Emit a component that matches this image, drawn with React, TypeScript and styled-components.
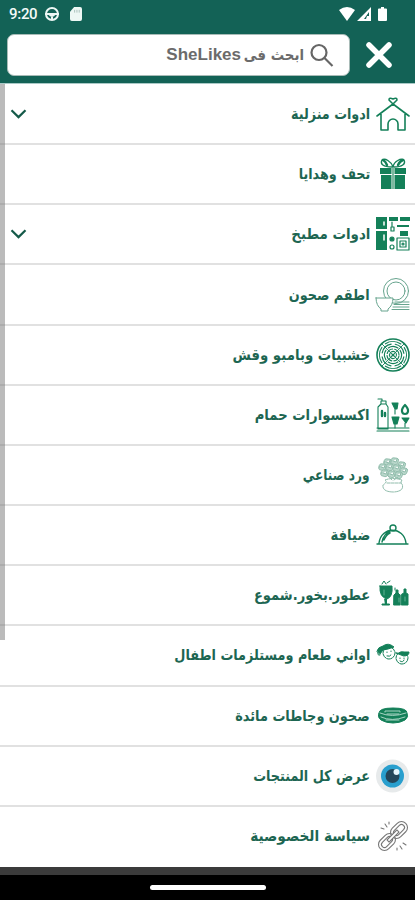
import React from "react";
import styled, { createGlobalStyle } from "styled-components";

const GREEN = "#148059";

const GlobalStyle = createGlobalStyle`
  * { box-sizing: border-box; }
  body { margin: 0; background: #fff; overflow: hidden; }
`;

const Screen = styled.div`
  width: 415px;
  height: 900px;
  display: flex;
  flex-direction: column;
  background: #fff;
  font-family: "DejaVu Sans", sans-serif;
`;

const Header = styled.header`
  height: 84px;
  flex: none;
  background: #136256;
  border-bottom: 1px solid #a9c9c6;
`;

const StatusBar = styled.div`
  height: 27px;
  padding: 0 28px 0 9px;
  display: flex;
  align-items: center;
  justify-content: space-between;
  color: #f3faf8;
`;

const StatusGroup = styled.div<{ $gap: number }>`
  display: flex;
  align-items: center;
  gap: ${(p) => p.$gap}px;
`;

const BatterySlot = styled.span`
  display: flex;
  margin-left: 5px;
`;

const Clock = styled.span`
  font: 500 15px/20px Roboto, sans-serif;
  width: 29px;
  margin-right: -4px;
  letter-spacing: -0.3px;
`;

const SearchBar = styled.div`
  display: flex;
  align-items: center;
  padding: 7px 21px 0 7px;
  justify-content: space-between;
`;

const SearchField = styled.div`
  width: 343px;
  height: 42px;
  border-radius: 7px;
  border: 1px solid #a8bbb7;
  background: #fff;
  display: flex;
  flex-direction: row-reverse;
  align-items: center;
  padding-right: 15px;
  gap: 5px;
`;

const Placeholder = styled.span`
  direction: rtl;
  display: flex;
  color: #6b6b6b;
  font: 700 15px/24px "DejaVu Sans", sans-serif;
  white-space: nowrap;
`;

const Prompt = styled.span`
  width: 63px;
  transform: scaleX(0.89);
  transform-origin: right center;
`;

const Brand = styled.bdi`
  font: 700 17px/24px "Liberation Sans", sans-serif;
`;

const CloseButton = styled.button`
  border: 0;
  padding: 0;
  background: none;
  width: 30px;
  height: 30px;
  display: flex;
`;

const Menu = styled.ul`
  list-style: none;
  margin: 0;
  padding: 1px 0 0;
  height: 783px;
  flex: none;
  display: grid;
  grid-template-rows: repeat(13, 1fr);
  position: relative;
`;

const Row = styled.li`
  direction: rtl;
  display: flex;
  align-items: center;
  gap: 5px;
  padding: 0 5px 0 10px;
  border-bottom: 2px solid #e1e1e1;
  min-height: 0;
  &:last-of-type { border-bottom-color: #fff; }
`;

const IconSlot = styled.span`
  width: 35px;
  height: 36px;
  flex: none;
  display: flex;
`;

const Label = styled.span<{ $stretch: number }>`
  color: #1d6652;
  font: 700 15px/24px "DejaVu Sans", sans-serif;
  white-space: nowrap;
  transform: scaleX(${(p) => p.$stretch});
  transform-origin: right center;
`;

const ChevronSlot = styled.span`
  margin-right: auto;
  display: flex;
`;

const ScrollThumb = styled.div`
  position: absolute;
  left: 0;
  top: 0;
  width: 5px;
  height: 556px;
  background: rgba(120, 120, 120, 0.5);
`;

const BottomBar = styled.footer`
  flex: 1;
  background: #000;
  border-top: 8px solid #3b3b3b;
  display: flex;
  justify-content: center;
  align-items: flex-start;
  padding-top: 10px;
`;

const HomeHandle = styled.div`
  width: 116px;
  height: 5px;
  border-radius: 3px;
  background: #fff;
`;

type Drawing = { children: React.ReactNode; stroke?: string; width?: number };
const Icon = ({ children, stroke = GREEN, width = 1.4 }: Drawing) => (
  <svg width="35" height="36" viewBox="0 0 35 36" fill="none" stroke={stroke} strokeWidth={width} strokeLinecap="round" strokeLinejoin="round">
    {children}
  </svg>
);

const House = () => (
  <Icon width={1.6}>
    <path d="M2 20 18 8 34 20M6 18v16h7v-6a5 5 0 0 1 10 0v6h7V18M18 8l-4-4q0-3 4-1 4-2 4 1z" />
  </Icon>
);

const Gift = () => (
  <Icon>
    <g fill={GREEN} stroke="none">
      <path d="M5 12h11.500v6H5zM19.500 12H31v6H19.500zM6 19h10.500v14H6zM19.500 19H30v14H19.500z" />
      <path d="M17 12h2v21h-2z" fill="#7db9a0" />
    </g>
    <path d="M17 11C8 11 5 8 7 4c3-2 9 1 11 7 1-6 8-9 11-7 2 4-2 7-10 7" />
    <path d="M8 4c2 1 3 2 4 5M28 4c-3 1-4 3-5 5" strokeWidth="2.4" />
  </Icon>
);

const Kitchen = () => (
  <Icon width={1.2}>
    <g fill={GREEN} stroke="none">
      <path d="M1 1h11v12H1zM1 15h11v19H1zM14 1h9v4h-9zM25 1h10v4H25zM22 9h12v2H22zM25 15h8v5h-8z" />
    </g>
    <path d="M9 6v3M9 19v5" stroke="#fff" strokeWidth="1.5" />
    <path d="M17 6v4M16 11h3v4h-3zM22 22h12v12H22zM25 25h6v6h-6z" />
    <circle cx="17" cy="23" r="2" fill={GREEN} />
    <circle cx="17" cy="31" r="2" />
    <circle cx="28" cy="28" r="1" />
  </Icon>
);

const Dishes = () => (
  <Icon stroke="#67a48e" width={1}>
    <circle cx="21" cy="14" r="12.500" />
    <circle cx="21" cy="14" r="9" />
    <path fill="#fff" d="M1 21h17c0 5-2 9-5 11v2H6v-2c-3-2-5-6-5-11z" />
    <path d="M20 25h14M19 27.500h15M18 30h16M17 32.500h17" />
  </Icon>
);

const Woven = () => (
  <Icon width={1.15}>
    <circle cx="18" cy="18" r="16" strokeWidth="1.6" />
    {[13.500, 11, 8.500, 6, 3.500].map((r, i) => (
      <circle key={r} cx="18" cy="18" r={r} strokeDasharray={`${r * 1.2} ${r * 0.371}`} transform={`rotate(${i % 2 ? 10 : 55} 18 18)`} />
    ))}
    <path d="M7 7l22 22M29 7 7 29" strokeWidth="0.9" />
    <circle cx="18" cy="18" r="1" />
  </Icon>
);

const Bath = () => (
  <Icon width={1.1}>
    <path d="M3 10 6 7h5l2 3v22H3zM6 7V4h5v3M7 4V2H3M2 34h32M2 31h32" />
    <path d="M7 19v-5M10 19v-3" strokeWidth="2.4" />
    <path fill={GREEN} d="M17 6h6l-1 6h-2zM20 12v5M17 20h7l-2 7h-3zM27 21h7l-3 5zM20 27v4M30 26v4" />
    <path d="M30 8c-5 5-3 9 0 9s5-4 0-9z" strokeWidth="2.2" />
  </Icon>
);

const Flowers = () => (
  <Icon stroke="#91bdac" width={1}>
    <g fill="#b9d7cb">
      {[[13, 5], [20, 4], [27, 8], [8, 10], [15, 10], [22, 11], [29, 14], [10, 16], [17, 17], [24, 18]].map(([x, y]) => (
        <path key={`${x}-${y}`} d={`M${x - 4} ${y}q0-4 4-3 5 0 3 4-1 4-5 2-3 0-2-3zm2 0 3 1 1-3`} />
      ))}
    </g>
    <path d="M12 18l5 5M23 20l-4 3M10 23q8-3 17 0-2 3 0 4 3 7-8 8-12 0-11-7 5-3 2-5zM12 26h14" strokeDasharray="3 1" />
  </Icon>
);

const Cloche = () => (
  <Icon width={1.4}>
    <path d="M2 27h31M4 26C6 9 29 9 31 26M7 25q2-9 8-10M9 23q2-5 6-7" />
    <circle cx="18" cy="11" r="3" />
  </Icon>
);

const Perfume = () => (
  <Icon width={1}>
    <g fill={GREEN}>
      <path d="M5 9h12q1 11-5 13-8-2-7-13zM10 22h1.500v5h3v1H7v-1h3zM19 18l2-2v-3h2v3l2 2v10h-6zM27 17l2-1v-4h2v4l2 1v11h-6z" />
    </g>
    <path d="M7 7l2-3 2 3M12 6l3-2M20 11v2M26 18v10" />
    <path d="M9 13v5M24 21v4M30 20v4" stroke="#60b294" />
  </Icon>
);

const Kids = () => (
  <Icon width={1}>
    <path fill={GREEN} d="M2 14q1-4 6-5 5-4 11 1l-6 2-5 1-3 4zM21 16q3 1 5-1h8q0 4-5 4z" />
    <circle cx="14" cy="16" r="6" strokeDasharray="5 1" />
    <circle cx="27" cy="21" r="6" strokeDasharray="5 1" />
    <path d="M12 15v.5M16 14v.5M12 19q3 1 4-1M25 21v.5M29 21v.5M25 24q3 2 4-1M3 15q-1 4 2 3" />
  </Icon>
);

const Plates = () => (
  <Icon width={1}>
    <path fill={GREEN} d="M4 15q0-5 14-5t14 5q2 4-2 7-5 3-12 3T6 22q-4-3-2-7z" />
    <path d="M5 15q12 5 26 0M6 19q11 5 24 0M10 14v-1h15v1M12 16h12M11 22h13" stroke="#a7d4c4" />
  </Icon>
);

const Eye = () => (
  <Icon>
    <g stroke="none">
      <circle cx="17.500" cy="18" r="16.500" fill="#e7eaeb" />
      <circle cx="17.500" cy="18" r="11.500" fill="#299fce" />
      <circle cx="17.500" cy="18" r="7" fill="#24465a" />
      <circle cx="21.500" cy="14" r="3" fill="#e5f5fc" />
    </g>
  </Icon>
);

const Chain = () => (
  <Icon stroke="#777" width={1.1}>
    <g transform="rotate(-45 18 18)">
      <rect x="0" y="12" width="19" height="12" rx="6" />
      <rect x="3" y="15" width="13" height="6" rx="3" />
      <rect x="17" y="12" width="19" height="12" rx="6" />
      <rect x="20" y="15" width="13" height="6" rx="3" />
      <path fill="#fff" d="M11 16.500h14v3H11z" />
    </g>
    <path d="M10 6l2 3M6 10l3 1M14 4v2M25 28l2 3M28 25l3 2M22 30v2" />
  </Icon>
);

const Chevron = () => (
  <svg width="17" height="12" viewBox="0 0 17 12" fill="none" stroke="#155a49" strokeWidth="2.2">
    <path d="m1.500 2.300 7 6.800 7-6.800" />
  </svg>
);

const items = [
  { label: "ادوات منزلية", icon: House, stretch: 0.85, expandable: true },
  { label: "تحف وهدايا", icon: Gift, stretch: 0.85 },
  { label: "ادوات مطبخ", icon: Kitchen, stretch: 0.895, expandable: true },
  { label: "اطقم صحون", icon: Dishes, stretch: 0.855 },
  { label: "خشبيات وبامبو وقش", icon: Woven, stretch: 0.888 },
  { label: "اكسسوارات حمام", icon: Bath, stretch: 0.88 },
  { label: "ورد صناعي", icon: Flowers, stretch: 0.81 },
  { label: "ضيافة", icon: Cloche, stretch: 0.88 },
  { label: "عطور.بخور.شموع", icon: Perfume, stretch: 0.873 },
  { label: "اواني طعام ومستلزمات اطفال", icon: Kids, stretch: 0.855 },
  { label: "صحون وجاطات مائدة", icon: Plates, stretch: 0.858 },
  { label: "عرض كل المنتجات", icon: Eye, stretch: 0.853 },
  { label: "سياسة الخصوصية", icon: Chain, stretch: 0.915 },
];

const StatusLeftIcons = () => (
  <>
    <svg width="16" height="16" viewBox="0 0 16 16" fill="none" stroke="#edf7f4" strokeWidth="2">
      <circle cx="8" cy="8" r="6" />
      <path d="M1 8h14M5 8q3 4 6 0M8 9v5" />
    </svg>
    <svg width="12" height="14" viewBox="0 0 13 15">
      <path fill="#edf7f4" d="M4.500 0H11q2 0 2 2v11q0 2-2 2H2q-2 0-2-2V5z" />
      <path stroke="#a7bfba" d="M5 3v3M7.500 3v3M10 3v3" />
    </svg>
  </>
);

const StatusRightIcons = () => (
  <>
    <svg width="16" height="14" viewBox="0 0 16 14"><path fill="#fff" d="M0 3q8-6 16 0L8 14z" /></svg>
    <svg width="14" height="14" viewBox="0 0 14 14">
      <path fill="#fff" fillRule="evenodd" d="M14 0v14H0zM12 5l-5 7h2l1-3h2z" />
    </svg>
    <BatterySlot>
      <svg width="9" height="14" viewBox="0 0 9 14"><path fill="#fff" d="M3 0h3v1.500h2q1 0 1 1V13q0 1-1 1H1q-1 0-1-1V2.500q0-1 1-1h2z" /></svg>
    </BatterySlot>
  </>
);

export default function App() {
  return (
    <Screen>
      <GlobalStyle />
      <Header>
        <StatusBar>
          <StatusGroup $gap={10}>
            <Clock>9:20</Clock>
            <StatusLeftIcons />
          </StatusGroup>
          <StatusGroup $gap={2}>
            <StatusRightIcons />
          </StatusGroup>
        </StatusBar>
        <SearchBar>
          <SearchField>
            <svg width="25" height="25" viewBox="0 0 25 25" fill="none" stroke="#666" strokeWidth="2.2">
              <circle cx="10" cy="9.500" r="7.500" />
              <path d="m15.500 15 8 8" />
            </svg>
            <Placeholder>
              <Prompt>ابحث فى</Prompt>
              <Brand>SheLikes</Brand>
            </Placeholder>
          </SearchField>
          <CloseButton aria-label="اغلاق">
            <svg width="30" height="30" viewBox="0 0 30 30" stroke="#fff" strokeWidth="5.500" strokeLinecap="round">
              <path d="m5 5 20 20M25 5 5 25" />
            </svg>
          </CloseButton>
        </SearchBar>
      </Header>
      <Menu>
        {items.map(({ label, icon: Glyph, stretch, expandable }) => (
          <Row key={label}>
            <IconSlot><Glyph /></IconSlot>
            <Label $stretch={stretch}>{label}</Label>
            {expandable && <ChevronSlot><Chevron /></ChevronSlot>}
          </Row>
        ))}
        <ScrollThumb />
      </Menu>
      <BottomBar>
        <HomeHandle />
      </BottomBar>
    </Screen>
  );
}
